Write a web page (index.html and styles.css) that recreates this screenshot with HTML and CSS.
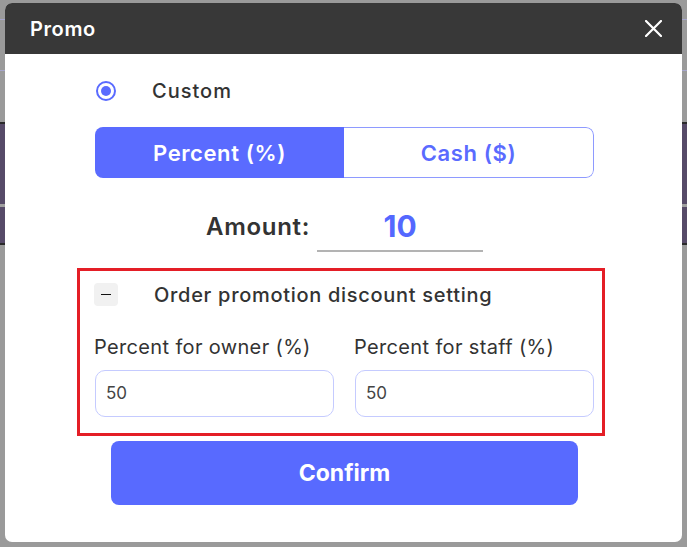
FILE: index.html
```html
<!DOCTYPE html>
<html lang="en">
<head>
    <meta charset="UTF-8">
    <title>Promo</title>
    <link rel="stylesheet" href="styles.css">
</head>
<body>
    <div class="modal">
        <div class="modal-head">
            <h3>Promo</h3>
            <span class="close">
                <svg width="17" height="17" viewBox="0 0 17 17"><path d="M1 1L16 16M16 1L1 16" stroke="#fff" stroke-width="2.2" stroke-linecap="round"/></svg>
            </span>
        </div>
        <div class="modal-body">
            <label class="radio">
                <span class="radio-dot"></span>
                <span>Custom</span>
            </label>
            <div class="toggle">
                <div class="seg active">Percent (%)</div>
                <div class="seg">Cash ($)</div>
            </div>
            <div class="amount">
                <span class="amount-label">Amount:</span>
                <div class="amount-input">10</div>
            </div>
            <div class="setting">
                <div class="setting-head">
                    <span class="minus"><i></i></span>
                    <span class="setting-title">Order promotion discount setting</span>
                </div>
                <div class="fields">
                    <div class="field">
                        <div class="field-label">Percent for owner (%)</div>
                        <div class="field-input">50</div>
                    </div>
                    <div class="field">
                        <div class="field-label">Percent for staff (%)</div>
                        <div class="field-input">50</div>
                    </div>
                </div>
            </div>
            <button class="confirm">Confirm</button>
        </div>
    </div>
</body>
</html>
```

FILE: styles.css
```css
body,h3{margin:0;}
body{
    height:547px;
    font-family: Inter, "Open Sans", sans-serif;
    color:#333;
    overflow:hidden;
    background: linear-gradient(to bottom,
        #9a9a9a 0 19px, #a6a6cc 19px 20px,
        #9a9a9a 20px 70px, #a6a6cc 70px 71px,
        #9a9a9a 71px 122px, #2a2a2a 122px 124px,
        #564a68 124px 204px, #a0a0a0 204px 207px,
        #564a68 207px 243px, #2a2a2a 243px 245px,
        #9a9a9a 245px);
    padding-top:3px;
    box-sizing:border-box;
}

.modal{
    width:677px;
    height:539px;
    margin-left:5px;
    background-color:#fff;
    border-radius:7px;
    overflow:hidden;
}
.modal-head{
    display:flex;
    align-items:center;
    justify-content:space-between;
    height:51px;
    padding:0 20px 0 25px;
    background-color:#383838;
}
.modal-head h3{
    color:#fff;
    font-size:20px;
    font-weight:600;
    letter-spacing:.6px;
}
.close{
    display:flex;
}

.modal-body{
    display:flex;
    flex-direction:column;
    align-items:flex-start;
}
.radio{
    display:flex;
    align-items:center;
    gap:36px;
    height:24px;
    margin:25px 0 0 91px;
    font-size:20px;
    font-weight:500;
    letter-spacing:1px;
}
.radio-dot{
    width:16px;
    height:16px;
    border:2px solid #5a6bff;
    border-radius:50%;
    position:relative;
}
.radio-dot::after{
    content:"";
    position:absolute;
    left:3px;
    top:3px;
    width:10px;
    height:10px;
    border-radius:50%;
    background-color:#5a6bff;
}

.toggle{
    display:flex;
    width:499px;
    height:51px;
    margin:24px 0 0 90px;
    border-radius:8px;
    overflow:hidden;
}
.toggle .seg{
    flex:1;
    display:flex;
    align-items:center;
    justify-content:center;
    border:1px solid #8e9aff;
    border-left:none;
    border-radius:0 8px 8px 0;
    color:#5a6bff;
    font-size:22px;
    font-weight:600;
    letter-spacing:.6px;
}
.toggle .seg.active{
    border:none;
    border-radius:0;
    background-color:#5a6bff;
    color:#fff;
}

.amount{
    display:flex;
    align-items:flex-start;
    gap:7px;
    margin:32px 0 0 201px;
}
.amount-label{
    line-height:34px;
    font-size:24px;
    font-weight:600;
    letter-spacing:.7px;
}
.amount-input{
    width:166px;
    padding-bottom:8px;
    border-bottom:2px solid #b3b3b3;
    color:#5468ff;
    font-size:30px;
    font-weight:700;
    line-height:32px;
    text-align:center;
}

.setting{
    width:528px;
    margin:16px 0 0 72px;
    padding:12px 8px 16px 14px;
    border:3px solid #e41e26;
    box-sizing:border-box;
}
.setting-head{
    display:flex;
    align-items:center;
    gap:36px;
    height:23px;
}
.minus{
    display:flex;
    align-items:center;
    justify-content:center;
    width:24px;
    height:23px;
    border-radius:4px;
    background-color:#f1f1f1;
}
.minus i{
    width:10px;
    height:1px;
    background-color:#111;
}
.setting-title{
    font-size:20px;
    font-weight:500;
    letter-spacing:.7px;
}
.fields{
    display:grid;
    grid-template-columns:239px 239px;
    gap:21px;
    margin:29px 0 0 1px;
}
.field-label{
    margin-left:-1px;
    font-size:20px;
    line-height:24px;
    letter-spacing:.35px;
}
.field-input{
    height:47px;
    margin-top:11px;
    padding-left:10px;
    border:1px solid #c5cbff;
    border-radius:10px;
    box-sizing:border-box;
    font-size:17px;
    line-height:45px;
    color:#444;
}

.confirm{
    width:467px;
    height:64px;
    margin:5px 0 0 106px;
    border:none;
    border-radius:8px;
    background-color:#586aff;
    color:#fff;
    font-family:inherit;
    font-size:23px;
    font-weight:700;
}
```
